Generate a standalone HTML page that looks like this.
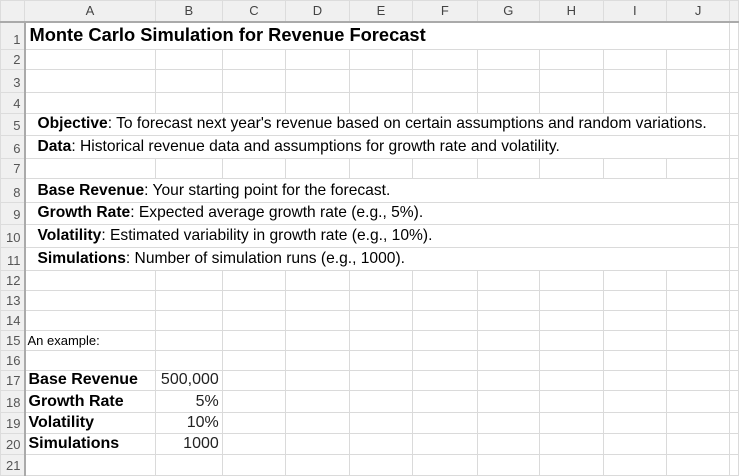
<!DOCTYPE html>
<html><head><style>
*{margin:0;padding:0;box-sizing:border-box}
body{width:739px;height:459px;overflow:hidden;background:#fff;font-family:"Liberation Sans",sans-serif;position:relative}
table{border-collapse:collapse;table-layout:fixed;position:absolute;left:0;top:0}
td{border:1px solid #dadada;padding:0;white-space:nowrap;overflow:visible;font-size:15px;color:#000;vertical-align:bottom}
tr.h td{background:#f0f0f0;color:#444;text-align:center;font-size:13px;border-color:#dcdcdc;border-bottom:2px solid #aaa;vertical-align:middle}
td.r{background:#f0f0f0;color:#555;text-align:right;font-size:13px;padding-right:3px;border-color:#dcdcdc;border-right:2px solid #aaa;vertical-align:bottom;padding-bottom:2px}
td.m{padding-left:12px;padding-bottom:2px;font-size:15.6px}
.t{font-weight:bold;font-size:18.3px;padding-left:4px;padding-bottom:3px}
b{font-weight:bold}
.v{text-align:right;padding-right:3px;color:#222;padding-bottom:1px;font-size:16px}
.k{font-weight:bold;padding-left:3px;padding-bottom:1px;font-size:16px}
</style></head><body>
<table>
<colgroup><col style="width:25px"><col style="width:131px"><col style="width:67px"><col style="width:64px"><col style="width:64px"><col style="width:64px"><col style="width:65px"><col style="width:63px"><col style="width:64px"><col style="width:64px"><col style="width:64px"><col style="width:10px"></colgroup>
<tr class="h" style="height:21px"><td></td><td>A</td><td>B</td><td>C</td><td>D</td><td>E</td><td>F</td><td>G</td><td>H</td><td>I</td><td>J</td><td></td></tr>
<tr style="height:28px"><td class="r">1</td><td colspan="10" class="t">Monte Carlo Simulation for Revenue Forecast</td><td></td></tr>
<tr style="height:20px"><td class="r">2</td><td></td><td></td><td></td><td></td><td></td><td></td><td></td><td></td><td></td><td></td><td></td></tr>
<tr style="height:23px"><td class="r">3</td><td></td><td></td><td></td><td></td><td></td><td></td><td></td><td></td><td></td><td></td><td></td></tr>
<tr style="height:21px"><td class="r">4</td><td></td><td></td><td></td><td></td><td></td><td></td><td></td><td></td><td></td><td></td><td></td></tr>
<tr style="height:22px"><td class="r">5</td><td colspan="10" class="m"><b>Objective</b>: To forecast next year's revenue based on certain assumptions and random variations.</td><td></td></tr>
<tr style="height:23px"><td class="r">6</td><td colspan="10" class="m"><b>Data</b>: Historical revenue data and assumptions for growth rate and volatility.</td><td></td></tr>
<tr style="height:20px"><td class="r">7</td><td></td><td></td><td></td><td></td><td></td><td></td><td></td><td></td><td></td><td></td><td></td></tr>
<tr style="height:24px"><td class="r">8</td><td colspan="10" class="m"><b>Base Revenue</b>: Your starting point for the forecast.</td><td></td></tr>
<tr style="height:22px"><td class="r">9</td><td colspan="10" class="m"><b>Growth Rate</b>: Expected average growth rate (e.g., 5%).</td><td></td></tr>
<tr style="height:23px"><td class="r">10</td><td colspan="10" class="m"><b>Volatility</b>: Estimated variability in growth rate (e.g., 10%).</td><td></td></tr>
<tr style="height:23px"><td class="r">11</td><td colspan="10" class="m"><b>Simulations</b>: Number of simulation runs (e.g., 1000).</td><td></td></tr>
<tr style="height:20px"><td class="r">12</td><td></td><td></td><td></td><td></td><td></td><td></td><td></td><td></td><td></td><td></td><td></td></tr>
<tr style="height:20px"><td class="r">13</td><td></td><td></td><td></td><td></td><td></td><td></td><td></td><td></td><td></td><td></td><td></td></tr>
<tr style="height:20px"><td class="r">14</td><td></td><td></td><td></td><td></td><td></td><td></td><td></td><td></td><td></td><td></td><td></td></tr>
<tr style="height:20px"><td class="r">15</td><td style="font-size:13px;padding-left:2px;padding-bottom:2px">An example:</td><td></td><td></td><td></td><td></td><td></td><td></td><td></td><td></td><td></td><td></td></tr>
<tr style="height:20px"><td class="r">16</td><td></td><td></td><td></td><td></td><td></td><td></td><td></td><td></td><td></td><td></td><td></td></tr>
<tr style="height:20px"><td class="r">17</td><td class="k">Base Revenue</td><td class="v">500,000</td><td></td><td></td><td></td><td></td><td></td><td></td><td></td><td></td><td></td></tr>
<tr style="height:22px"><td class="r">18</td><td class="k">Growth Rate</td><td class="v">5%</td><td></td><td></td><td></td><td></td><td></td><td></td><td></td><td></td><td></td></tr>
<tr style="height:21px"><td class="r">19</td><td class="k">Volatility</td><td class="v">10%</td><td></td><td></td><td></td><td></td><td></td><td></td><td></td><td></td><td></td></tr>
<tr style="height:21px"><td class="r">20</td><td class="k">Simulations</td><td class="v">1000</td><td></td><td></td><td></td><td></td><td></td><td></td><td></td><td></td><td></td></tr>
<tr style="height:21px"><td class="r">21</td><td></td><td></td><td></td><td></td><td></td><td></td><td></td><td></td><td></td><td></td><td></td></tr>
</table>
</body></html>
